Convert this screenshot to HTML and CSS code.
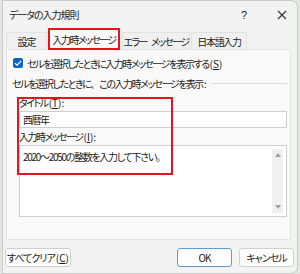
FILE: index.html
```html
<!DOCTYPE html>
<html>
<head>
    <meta charset="utf-8">
    <link rel="stylesheet" href="styles.css">
</head>
<body>
    <div class="dialog">
        <div class="titlebar">
            <span class="title">データの入力規則</span>
            <span class="help">?</span>
            <span class="close">
                <svg width="10" height="10" viewBox="0 0 10 10"><path d="M1 1 L9 9 M9 1 L1 9" stroke="#333" stroke-width="1.1"/></svg>
            </span>
        </div>

        <div class="tabs">
            <div class="tab tab-settings">設定</div>
            <div class="tab tab-input active">入力時メッセージ</div>
            <div class="tab tab-error">エラー <span class="gap">メッセージ</span></div>
            <div class="tab tab-ime">日本語入力</div>
        </div>

        <div class="panel">
            <div class="check-row">
                <span class="checkbox">
                    <svg width="10" height="10" viewBox="0 0 10 10"><path d="M2 5.2 L4.1 7.2 L8.2 2.8" fill="none" stroke="#fff" stroke-width="1.2"/></svg>
                </span>
                <span>セルを選択したときに入力時メッセージを表示する<span class="key">(<u>S</u>)</span></span>
            </div>

            <div class="group-label">
                <span>セルを選択したときに<span class="wide">、</span>この入力時メッセージを表示<span class="key">:</span></span>
                <span class="group-line"></span>
            </div>

            <div class="fields">
                <div class="field-label">タイトル<span class="key">(<u>T</u>):</span></div>
                <div class="text-input">西暦年</div>
                <div class="field-label">入力時メッセージ<span class="key">(<u>I</u>):</span></div>
                <div class="text-area">
                    <span>2020～2050の整数を入力して下さい。</span>
                    <div class="scrollbar">
                        <span class="arrow up"></span>
                        <span class="arrow down"></span>
                    </div>
                </div>
            </div>

            <div class="highlight"></div>
        </div>

        <div class="footer">
            <button class="btn btn-clear">すべてクリア<span class="key">(<u>C</u>)</span></button>
            <span class="spacer"></span>
            <button class="btn primary">OK</button>
            <button class="btn btn-cancel">キャンセル</button>
        </div>
    </div>
</body>
</html>
```

FILE: styles.css
```css
body {
    margin: 0;
    background-color: #e2e6df;
    font-family: "Noto Sans CJK JP", "Noto Sans", sans-serif;
    font-size: 10px;
    letter-spacing: -1px;
    font-feature-settings: "palt";
    color: #1b1b1b;
    overflow: hidden;
}

.key {
    letter-spacing: 0;
    margin-left: 1px;
}

.wide {
    font-feature-settings: normal;
    letter-spacing: -1px;
}

.dialog {
    margin-left: 2px;
    width: 294px;
    height: 272px;
    background-color: #f3f3f3;
    border: 1px solid #c9c9c9;
    border-radius: 0 7px 7px 0;
    position: relative;
}

.titlebar {
    display: flex;
    align-items: center;
    height: 27px;
    padding-left: 6px;
}

.title {
    flex: 1;
}

.help {
    width: 14px;
    font-size: 11px;
    margin-right: 22px;
    font-family: "Liberation Sans", sans-serif;
    letter-spacing: 0;
}

.close {
    width: 10px;
    margin-right: 10px;
    display: flex;
}

.tabs {
    display: flex;
    align-items: flex-end;
    padding-left: 3px;
    height: 21px;
    letter-spacing: -1.6px;
}

.tab {
    height: 17px;
    display: flex;
    align-items: center;
    justify-content: center;
    white-space: nowrap;
    background-color: #f0f0f0;
    border: 1px solid #e2e2e2;
    border-bottom: none;
    box-sizing: border-box;
    margin-right: 1px;
}

.tab .gap {
    margin-left: 4px;
}

.tab-settings {
    width: 41px;
    letter-spacing: -1px;
}

.tab-input {
    width: 70px;
}

.tab-error {
    width: 68px;
}

.tab-ime {
    width: 56px;
    letter-spacing: -1.3px;
}

.tab.active {
    height: 20px;
    background-color: #f9f9f9;
    outline: 2px solid #e8141c;
    outline-offset: -1px;
    position: relative;
    z-index: 1;
    margin-left: 1px;
    margin-right: 3px;
}

.panel {
    margin-left: 3px;
    width: 283px;
    height: 189px;
    background-color: #f9f9f9;
    border: 1px solid #e4e4e4;
    position: relative;
    letter-spacing: -1.5px;
}

.check-row {
    display: flex;
    align-items: center;
    height: 12px;
    margin-top: 7px;
    padding-left: 6px;
    gap: 4px;
}

.checkbox {
    width: 10px;
    height: 10px;
    border-radius: 2px;
    background-color: #0f66c0;
    display: flex;
}

.group-label {
    display: flex;
    align-items: center;
    height: 14px;
    margin-top: 7px;
    padding-left: 5px;
    padding-right: 3px;
}

.group-line {
    flex: 1;
    border-top: 1px solid #dcdcdc;
    margin-left: 4px;
}

.fields {
    padding-left: 12px;
    padding-right: 3px;
}

.field-label {
    height: 14px;
    line-height: 14px;
    margin-top: 6px;
}

.field-label + .text-area {
    margin-top: 1px;
}

.text-input {
    height: 15px;
    margin-top: 1px;
    background-color: #fff;
    border: 1px solid #cfcfcf;
    padding-left: 3px;
    line-height: 15px;
    margin-bottom: -4px;
}

.text-area {
    background-color: #fff;
    border: 1px solid #cfcfcf;
    padding: 3px 3px;
    display: flex;
    justify-content: space-between;
    box-sizing: border-box;
    height: 72px;
    letter-spacing: -1.3px;
}

.scrollbar {
    width: 11px;
    background-color: #f0f0f0;
    display: flex;
    flex-direction: column;
    justify-content: space-between;
    align-items: center;
    padding: 4px 0;
}

.arrow {
    width: 0;
    height: 0;
    border-left: 3px solid transparent;
    border-right: 3px solid transparent;
}

.arrow.up {
    border-bottom: 4px solid #a0a0a0;
}

.arrow.down {
    border-top: 4px solid #a0a0a0;
}

.highlight {
    position: absolute;
    left: 10px;
    top: 47px;
    width: 152px;
    height: 74px;
    border: 2px solid #e8141c;
}

.footer {
    display: flex;
    align-items: center;
    padding: 8px 3px 0 2px;
    gap: 7px;
}

.spacer {
    flex: 1;
}

.btn {
    height: 19px;
    padding: 0;
    background-color: #fdfdfd;
    border: 1px solid #d0d0d0;
    border-radius: 3px;
    font-family: inherit;
    font-size: 10px;
    letter-spacing: -1px;
    font-feature-settings: "palt";
    color: #1b1b1b;
    line-height: 17px;
    white-space: nowrap;
}

.btn-clear {
    width: 66px;
}

.btn.primary {
    width: 55px;
    border-color: #5b9bd8;
}

.btn-cancel {
    width: 55px;
}
```
